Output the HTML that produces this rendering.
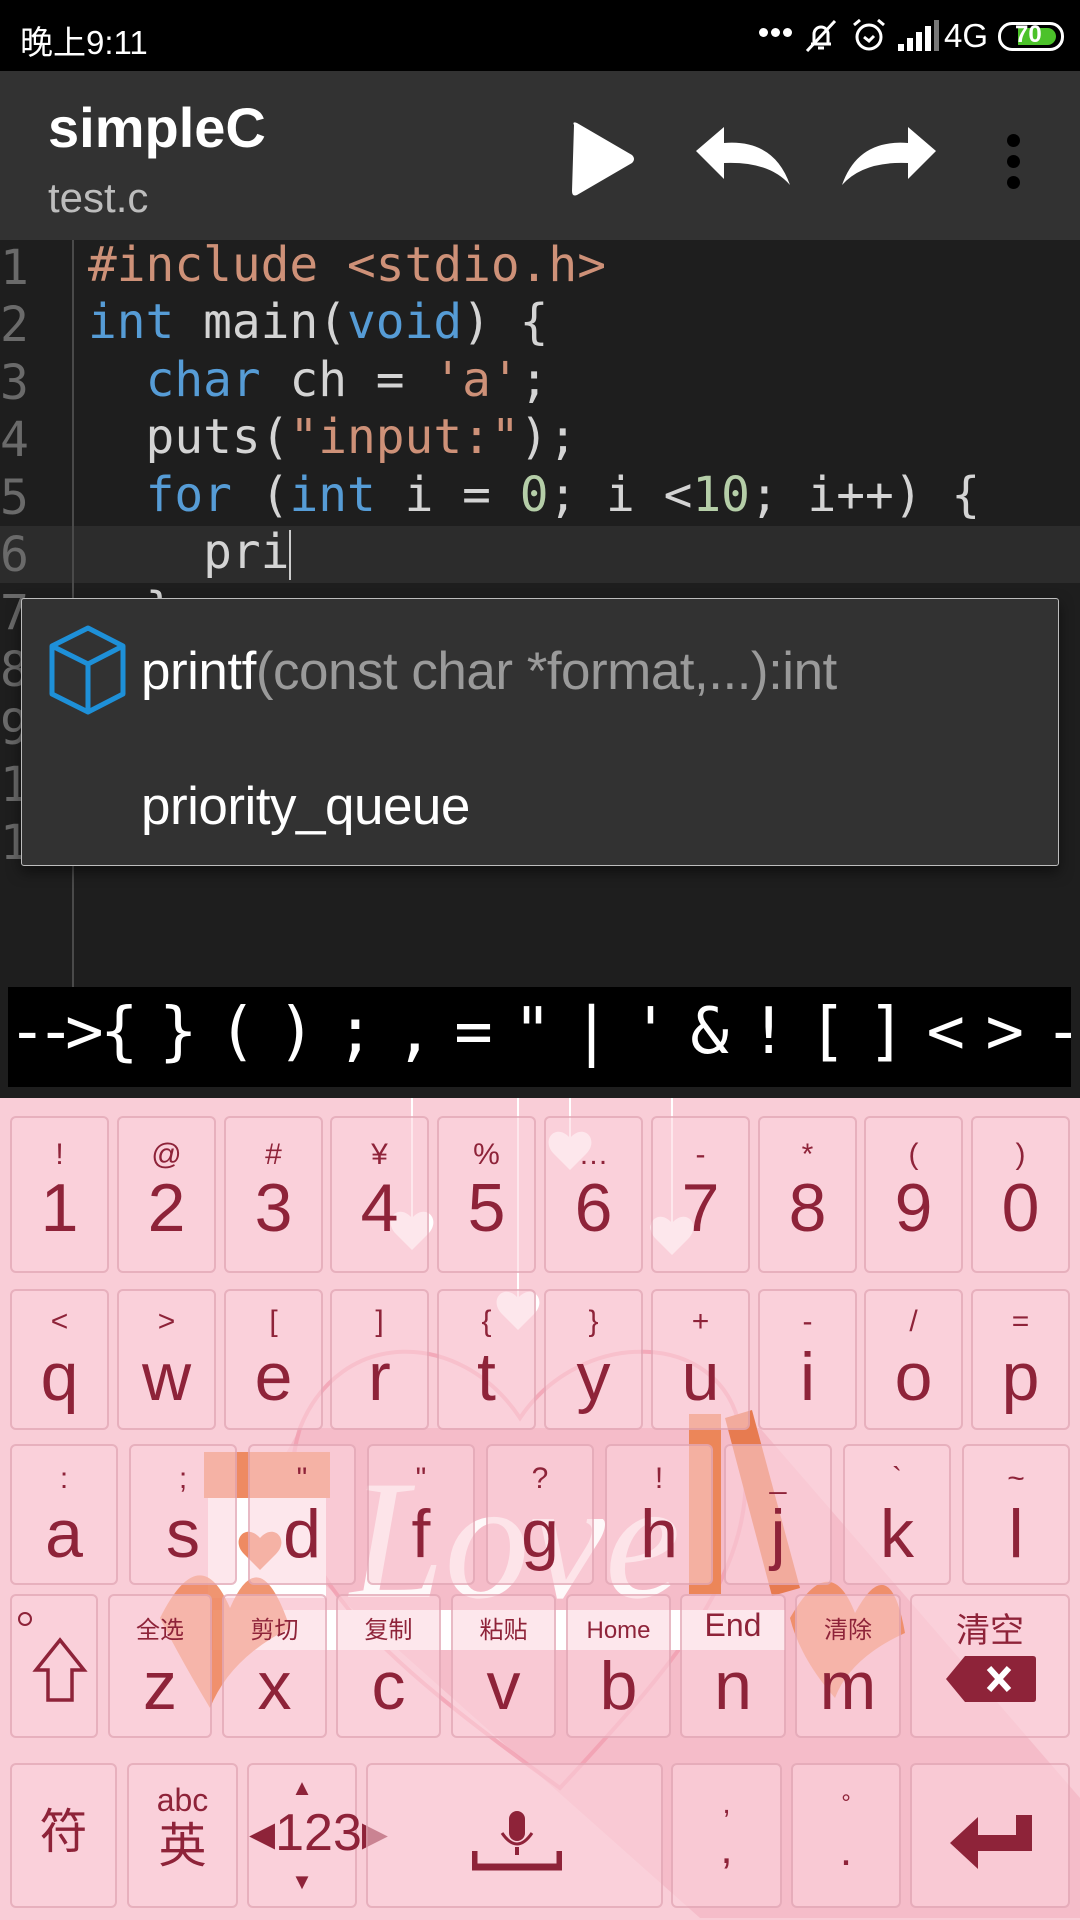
<!DOCTYPE html>
<html><head><meta charset="utf-8">
<style>
*{margin:0;padding:0;box-sizing:border-box}
body{width:1080px;height:1920px;overflow:hidden;background:#1e1e1e;font-family:"Liberation Sans","Noto Sans CJK SC",sans-serif;position:relative}
.abs{position:absolute}
#status{left:0;top:0;width:1080px;height:71px;background:#000;color:#fff}
#bar{left:0;top:71px;width:1080px;height:169px;background:#323232}
#editor{left:0;top:240px;width:1080px;height:748px;background:#1e1e1e}
.ln{position:absolute;left:0;font-family:"DejaVu Sans Mono",monospace;font-size:48px;color:#6a6a6a;}
.cl{position:absolute;left:88px;font-family:"DejaVu Sans Mono",monospace;font-size:47.8px;color:#d4d4d4;white-space:pre}
.k{color:#569cd6}.s{color:#ce9178}.n{color:#b5cea8}
#popup{left:21px;top:598px;width:1038px;height:268px;background:#323232;border:1.5px solid #bdbdbd;border-radius:3px;box-shadow:0 6px 14px rgba(0,0,0,.5)}
#sym{left:8px;top:987px;width:1063px;height:100px;background:#000;color:#fff;font-family:"DejaVu Sans Mono",monospace;font-size:64px;overflow:hidden}
#kb{left:0;top:1098px;width:1080px;height:822px;background:#f9cdd7;overflow:hidden}
.key{position:absolute;background:rgba(251,212,221,.55);border:2px solid rgba(215,150,165,.55);border-radius:6px;color:#8e2339;text-align:center}
.key .t{position:absolute;left:0;right:0;font-size:30px;line-height:30px}
.key .m{position:absolute;left:0;right:0;font-size:68px;line-height:68px}
.r1{top:18px;height:157px}.r1 .t{top:22px}.r1 .m{top:56px}
.r2{top:191px;height:141px}.r2 .t{top:16px}.r2 .m{top:52px}
.r3{top:346px;height:141px}.r3 .t{top:18px}.r3 .m{top:54px}
.r4{top:496px;height:144px}.r4 .m{top:56px}
.r5{top:665px;height:145px}
</style></head><body>

<div id="status" class="abs">
  <div class="abs" style="left:20px;top:16px;font-size:33px;">晚上9:11</div>
  <div class="abs" style="left:759px;top:28px;width:9px;height:9px;border-radius:5px;background:#fff"></div>
  <div class="abs" style="left:771px;top:28px;width:9px;height:9px;border-radius:5px;background:#fff"></div>
  <div class="abs" style="left:783px;top:28px;width:9px;height:9px;border-radius:5px;background:#fff"></div>
  <svg class="abs" style="left:803px;top:18px" width="36" height="36" viewBox="0 0 36 36" fill="none" stroke="#fff" stroke-width="3"><path d="M8 26h20M11 26V16a7 7 0 0 1 14 0v10M15 30h6M4 33L32 3"/></svg>
  <svg class="abs" style="left:851px;top:16px" width="36" height="38" viewBox="0 0 36 38" fill="none" stroke="#fff" stroke-width="3"><circle cx="18" cy="21" r="12"/><path d="M13 21l5 4 5-5M3 9l6-5M33 9l-6-5"/></svg>
  <svg class="abs" style="left:898px;top:20px" width="42" height="32" viewBox="0 0 42 32" fill="#fff"><rect x="0" y="24" width="6" height="7"/><rect x="9" y="18" width="6" height="13"/><rect x="18" y="12" width="6" height="19"/><rect x="27" y="6" width="6" height="25"/><rect x="36" y="0" width="5" height="31" fill="#777"/></svg>
  <div class="abs" style="left:944px;top:17px;font-size:33px">4G</div>
  <div class="abs" style="left:998px;top:22px;width:66px;height:29px;border:3px solid #fff;border-radius:14px">
    <div class="abs" style="left:17px;top:3px;width:38px;height:17px;background:#4cc22a;border-radius:0 9px 9px 0"></div>
    <div class="abs" style="left:14px;top:-4px;font-size:24px;font-weight:bold;color:#fff">70</div>
  </div>
</div>

<div id="bar" class="abs">
  <div class="abs" style="left:48px;top:24px;font-size:56px;color:#fff;font-weight:bold">simpleC</div>
  <div class="abs" style="left:48px;top:103px;font-size:42px;color:#bdbdbd">test.c</div>
  <svg class="abs" style="left:568px;top:48px" width="70" height="80" viewBox="0 0 70 80"><path d="M6 6 Q4 2 9 4 L64 36 Q68 40 64 44 L9 76 Q4 78 4 72Z" fill="#fff"/></svg>
  <svg class="abs" style="left:694px;top:54px" width="100" height="66" viewBox="0 0 100 66"><path d="M2 26 L30 2 L30 18 Q80 14 96 60 Q75 36 30 38 L30 54Z" fill="#fff"/></svg>
  <svg class="abs" style="left:838px;top:54px" width="100" height="66" viewBox="0 0 100 66"><path d="M98 26 L70 2 L70 18 Q20 14 4 60 Q25 36 70 38 L70 54Z" fill="#fff"/></svg>
  <div class="abs" style="left:1007px;top:63px;width:13px;height:13px;border-radius:7px;background:#000"></div>
  <div class="abs" style="left:1007px;top:84px;width:13px;height:13px;border-radius:7px;background:#000"></div>
  <div class="abs" style="left:1007px;top:105px;width:13px;height:13px;border-radius:7px;background:#000"></div>
</div>

<div id="editor" class="abs">
  <div class="abs" style="left:0;top:286px;width:1080px;height:57px;background:#2c2c2c"></div>
  <div class="abs" style="left:72px;top:0;width:2px;height:748px;background:#4a4a4a"></div>
  <div class="ln" style="top:0">1</div><div class="ln" style="top:57px">2</div><div class="ln" style="top:115px">3</div><div class="ln" style="top:172px">4</div><div class="ln" style="top:230px">5</div><div class="ln" style="top:287px">6</div><div class="ln" style="top:345px">7</div><div class="ln" style="top:402px">8</div><div class="ln" style="top:460px">9</div><div class="ln" style="top:517px">1</div><div class="ln" style="top:575px">1</div>
  <div class="cl" style="top:-2px"><span class="s">#include &lt;stdio.h&gt;</span></div>
  <div class="cl" style="top:55px"><span class="k">int</span> main(<span class="k">void</span>) {</div>
  <div class="cl" style="top:113px">  <span class="k">char</span> ch = <span class="s">'a'</span>;</div>
  <div class="cl" style="top:170px">  puts(<span class="s">"input:"</span>);</div>
  <div class="cl" style="top:228px">  <span class="k">for</span> (<span class="k">int</span> i = <span class="n">0</span>; i &lt;<span class="n">10</span>; i++) {</div>
  <div class="cl" style="top:285px">    pri</div>
  <div class="abs" style="left:289px;top:290px;width:2px;height:50px;background:#ccc"></div>
  <div class="cl" style="top:343px">  }</div>
</div>

<div id="popup" class="abs">
  <svg class="abs" style="left:25px;top:25px" width="82" height="92" viewBox="0 0 82 92" fill="none" stroke="#1e90d8" stroke-width="5" stroke-linejoin="round"><path d="M41 4 L76 22 L76 70 L41 88 L5 70 L5 22 Z M5 22 L41 40 L76 22 M41 40 L41 88"/></svg>
  <div class="abs" style="left:119px;top:42px;font-size:53px;color:#fff;letter-spacing:-0.5px">printf<span style="color:#9a9a9a">(const char *format,...):int</span></div>
  <div class="abs" style="left:119px;top:177px;font-size:53px;color:#fff;letter-spacing:-0.5px">priority_queue</div>
</div>

<div id="sym" class="abs"><div class="abs" style="left:0;top:8px;white-space:pre;letter-spacing:-10px">--&gt;</div><div class="abs" style="left:92px;top:8px;white-space:pre;letter-spacing:20.5px">{}();,="|'&amp;![]&lt;&gt;-</div></div>

<div id="kb" class="abs">
  <svg class="abs" style="left:0;top:0" width="1080" height="822" viewBox="0 0 1080 822">
    <path d="M250 420 L700 820 L1080 820 L1080 700 L760 330 L300 330Z" fill="#efa9b8" opacity=".45"/>
    <path d="M560 690 C380 560 260 460 300 330 C340 230 460 230 520 320 C580 230 720 230 740 330 C770 460 680 560 560 690Z" fill="none" stroke="#f19aac" stroke-width="4" opacity=".7"/>
    <rect x="204" y="354" width="126" height="46" fill="#ee8a62"/>
    <rect x="208" y="400" width="118" height="100" fill="#fff"/>
    <path d="M260 440 c-14-16-30 2-16 16 l16 16 16-16 c14-14-2-32-16-16z" fill="#ee8a62"/>
    <rect x="689" y="316" width="32" height="180" fill="#ec8659"/>
    <path d="M725 320 L752 312 L800 490 L772 498Z" fill="#e77b50"/>
    <rect x="213" y="512" width="572" height="40" fill="#fff"/>
    <path d="M160 520 Q200 440 230 510 Q260 440 290 530 Q230 560 210 610 Q180 560 160 520Z" fill="#ee8a62" opacity=".9"/>
    <path d="M790 520 Q830 450 855 515 Q890 450 905 535 Q850 560 835 600 Q800 560 790 520Z" fill="#ee8a62" opacity=".9"/>
    <path d="M570 40 c-14-16-30 2-16 16 l16 16 16-16 c14-14-2-32-16-16z" fill="#fff"/>
    <path d="M412 120 c-14-16-30 2-16 16 l16 16 16-16 c14-14-2-32-16-16z" fill="#fff"/>
    <path d="M672 125 c-14-16-30 2-16 16 l16 16 16-16 c14-14-2-32-16-16z" fill="#fff"/>
    <path d="M518 200 c-14-16-30 2-16 16 l16 16 16-16 c14-14-2-32-16-16z" fill="#fff"/>
    <line x1="412" y1="0" x2="412" y2="120" stroke="#fff" stroke-width="2"/><line x1="570" y1="0" x2="570" y2="40" stroke="#fff" stroke-width="2"/><line x1="672" y1="0" x2="672" y2="125" stroke="#fff" stroke-width="2"/><line x1="518" y1="0" x2="518" y2="200" stroke="#fff" stroke-width="2"/>
  </svg>
  <div class="abs" style="left:350px;top:345px;font-family:'Liberation Serif',serif;font-style:italic;font-size:170px;color:#fff;opacity:.9">Love</div>

  <div class="key r1" style="left:10px;width:99px"><div class="t">!</div><div class="m">1</div></div>
  <div class="key r1" style="left:117px;width:99px"><div class="t">@</div><div class="m">2</div></div>
  <div class="key r1" style="left:224px;width:99px"><div class="t">#</div><div class="m">3</div></div>
  <div class="key r1" style="left:330px;width:99px"><div class="t">¥</div><div class="m">4</div></div>
  <div class="key r1" style="left:437px;width:99px"><div class="t">%</div><div class="m">5</div></div>
  <div class="key r1" style="left:544px;width:99px"><div class="t">…</div><div class="m">6</div></div>
  <div class="key r1" style="left:651px;width:99px"><div class="t">-</div><div class="m">7</div></div>
  <div class="key r1" style="left:758px;width:99px"><div class="t">*</div><div class="m">8</div></div>
  <div class="key r1" style="left:864px;width:99px"><div class="t">(</div><div class="m">9</div></div>
  <div class="key r1" style="left:971px;width:99px"><div class="t">)</div><div class="m">0</div></div>
  <div class="key r2" style="left:10px;width:99px"><div class="t">&lt;</div><div class="m">q</div></div>
  <div class="key r2" style="left:117px;width:99px"><div class="t">&gt;</div><div class="m">w</div></div>
  <div class="key r2" style="left:224px;width:99px"><div class="t">[</div><div class="m">e</div></div>
  <div class="key r2" style="left:330px;width:99px"><div class="t">]</div><div class="m">r</div></div>
  <div class="key r2" style="left:437px;width:99px"><div class="t">{</div><div class="m">t</div></div>
  <div class="key r2" style="left:544px;width:99px"><div class="t">}</div><div class="m">y</div></div>
  <div class="key r2" style="left:651px;width:99px"><div class="t">+</div><div class="m">u</div></div>
  <div class="key r2" style="left:758px;width:99px"><div class="t">-</div><div class="m">i</div></div>
  <div class="key r2" style="left:864px;width:99px"><div class="t">/</div><div class="m">o</div></div>
  <div class="key r2" style="left:971px;width:99px"><div class="t">=</div><div class="m">p</div></div>
  <div class="key r3" style="left:10px;width:108px"><div class="t">:</div><div class="m">a</div></div>
  <div class="key r3" style="left:129px;width:108px"><div class="t">;</div><div class="m">s</div></div>
  <div class="key r3" style="left:248px;width:108px"><div class="t">"</div><div class="m">d</div></div>
  <div class="key r3" style="left:367px;width:108px"><div class="t">"</div><div class="m">f</div></div>
  <div class="key r3" style="left:486px;width:108px"><div class="t">?</div><div class="m">g</div></div>
  <div class="key r3" style="left:605px;width:108px"><div class="t">!</div><div class="m">h</div></div>
  <div class="key r3" style="left:724px;width:108px"><div class="t">_</div><div class="m">j</div></div>
  <div class="key r3" style="left:843px;width:108px"><div class="t">`</div><div class="m">k</div></div>
  <div class="key r3" style="left:962px;width:108px"><div class="t">~</div><div class="m">l</div></div>
  <div class="key r4" style="left:10px;width:88px">
    <div class="abs" style="left:6px;top:16px;width:14px;height:14px;border:2.5px solid #8e2339;border-radius:7px"></div>
    <svg class="abs" style="left:20px;top:40px" width="56" height="70" viewBox="0 0 56 70" fill="none" stroke="#8e2339" stroke-width="3.5"><path d="M28 4 L52 34 L40 34 L40 64 L16 64 L16 34 L4 34 Z"/></svg>
  </div>
  <div class="key r4" style="left:108px;width:104px"><div class="t" style="top:20px;font-size:24px">全选</div><div class="m">z</div></div>
  <div class="key r4" style="left:222px;width:105px"><div class="t" style="top:20px;font-size:24px">剪切</div><div class="m">x</div></div>
  <div class="key r4" style="left:336px;width:105px"><div class="t" style="top:20px;font-size:24px">复制</div><div class="m">c</div></div>
  <div class="key r4" style="left:451px;width:105px"><div class="t" style="top:20px;font-size:24px">粘贴</div><div class="m">v</div></div>
  <div class="key r4" style="left:566px;width:105px"><div class="t" style="top:20px;font-size:24px">Home</div><div class="m">b</div></div>
  <div class="key r4" style="left:680px;width:106px"><div class="t" style="top:14px;font-size:32px">End</div><div class="m">n</div></div>
  <div class="key r4" style="left:795px;width:106px"><div class="t" style="top:20px;font-size:24px">清除</div><div class="m">m</div></div>
  <div class="key r4" style="left:910px;width:160px"><div class="t" style="top:18px;font-size:34px;line-height:34px">清空</div>
    <svg class="abs" style="left:33px;top:58px" width="92" height="50" viewBox="0 0 92 50"><path d="M20 2 L88 2 Q91 2 91 5 L91 45 Q91 48 88 48 L20 48 L1 25Z" fill="#8e2339"/><path d="M44 14 L64 36 M64 14 L44 36" stroke="#fff" stroke-width="6"/></svg>
  </div>
  <div class="key r5" style="left:10px;width:107px"><div class="m" style="top:38px;font-size:48px;line-height:60px">符</div></div>
  <div class="key r5" style="left:127px;width:111px"><div class="t" style="top:20px;font-size:32px">abc</div><div class="m" style="top:52px;font-size:48px;line-height:60px">英</div></div>
  <div class="key r5" style="left:247px;width:110px"><div class="t" style="top:8px;font-size:22px">▲</div><div class="m" style="top:38px;font-size:52px;line-height:60px">◂123▸</div><div class="t" style="top:102px;font-size:22px">▼</div></div>
  <div class="key r5" style="left:366px;width:297px">
    <svg class="abs" style="left:104px;top:46px" width="90" height="60" viewBox="0 0 90 60" fill="#8e2339"><rect x="37" y="0" width="16" height="30" rx="8"/><path d="M30 22 Q45 44 60 22" fill="none" stroke="#8e2339" stroke-width="3"/><rect x="43" y="36" width="4" height="8"/><path d="M2 40 L2 56 L88 56 L88 40" fill="none" stroke="#8e2339" stroke-width="7"/></svg>
  </div>
  <div class="key r5" style="left:671px;width:111px"><div class="t" style="top:24px">,</div><div class="m" style="top:50px;font-size:44px">,</div></div>
  <div class="key r5" style="left:791px;width:110px"><div class="t" style="top:24px;font-size:24px">°</div><div class="m" style="top:52px;font-size:44px">.</div></div>
  <div class="key r5" style="left:910px;width:160px">
    <svg class="abs" style="left:38px;top:44px" width="84" height="60" viewBox="0 0 84 60" fill="#8e2339"><path d="M0 34 L28 8 L28 26 L66 26 L66 6 L82 6 L82 42 L28 42 L28 60Z"/></svg>
  </div>
</div>
</body></html>
